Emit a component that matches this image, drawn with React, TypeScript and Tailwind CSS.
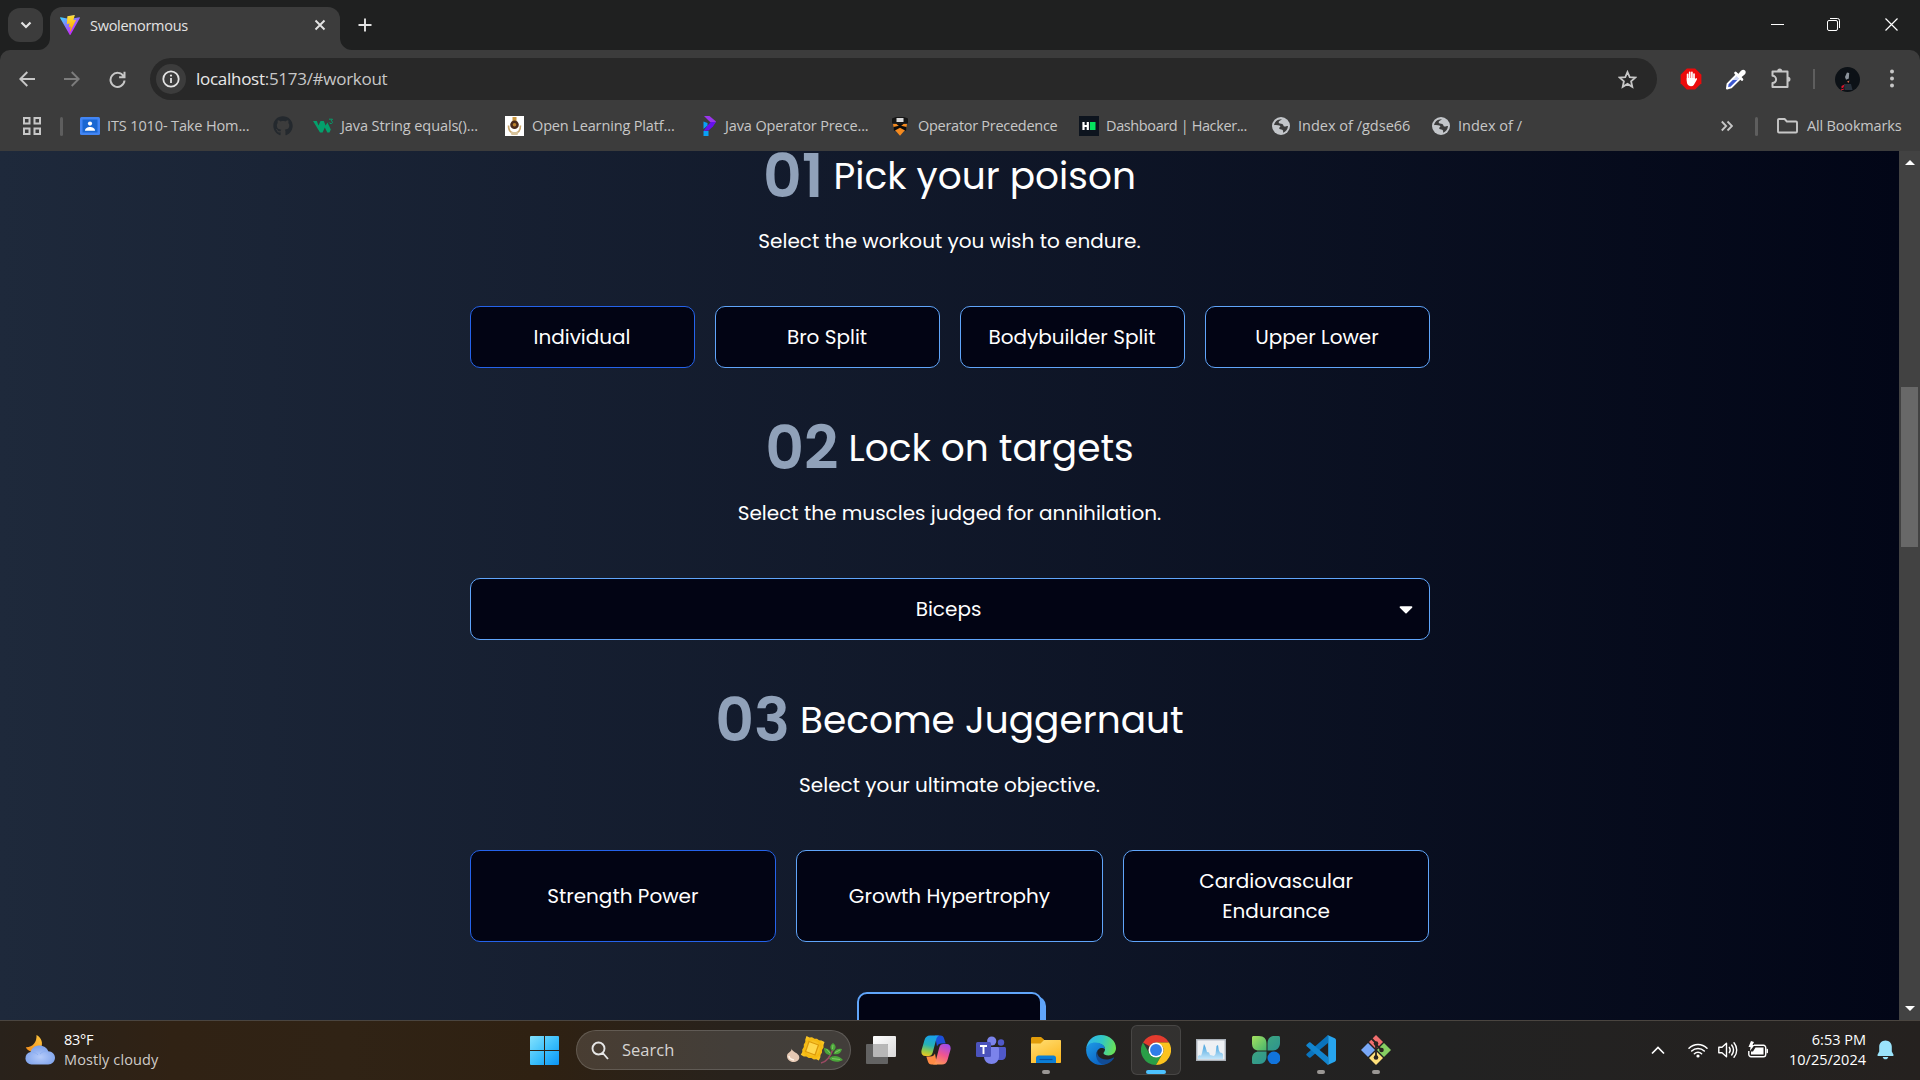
import React from "react";
import { FaCaretDown, FaGithub } from "react-icons/fa";

/* ---------- Tab strip and toolbar icons ---------- */

const ViteLogo = () => (
  <svg className="size-5 shrink-0" viewBox="0 0 256 257">
    <defs>
      <linearGradient id="va" x1="-.8%" x2="57.6%" y1="7.7%" y2="78.4%">
        <stop offset="0%" stopColor="#41D1FF" />
        <stop offset="100%" stopColor="#BD34FE" />
      </linearGradient>
      <linearGradient id="vb" x1="43.4%" x2="50.3%" y1="2.2%" y2="89%">
        <stop offset="0%" stopColor="#FFEA83" />
        <stop offset="8.3%" stopColor="#FFDD35" />
        <stop offset="100%" stopColor="#FFA800" />
      </linearGradient>
    </defs>
    <path fill="url(#va)" d="M255.153 37.938 134.897 252.976c-2.483 4.44-8.862 4.466-11.382.048L.875 37.958c-2.746-4.814 1.371-10.646 6.827-9.67l120.385 21.517a6.537 6.537 0 0 0 2.322-.004l117.867-21.483c5.438-.991 9.574 4.796 6.877 9.62Z" />
    <path fill="url(#vb)" d="M185.432.063 96.44 17.501a3.268 3.268 0 0 0-2.634 3.014l-5.474 92.456a3.268 3.268 0 0 0 3.997 3.378l24.777-5.718c2.318-.535 4.413 1.507 3.936 3.838l-7.361 36.047c-.495 2.426 1.782 4.5 4.151 3.78l15.304-4.649c2.372-.72 4.652 1.36 4.15 3.788l-11.698 56.621c-.732 3.542 3.979 5.473 5.943 2.437l1.313-2.028 72.516-144.72c1.215-2.423-.88-5.186-3.54-4.672l-25.505 4.922c-2.396.462-4.435-1.77-3.759-4.114l16.646-57.705c.677-2.35-1.37-4.583-3.769-4.113Z" />
  </svg>
);

const Glyph = ({
  d,
  box,
  className,
  w = 2,
}: {
  d: string;
  box: string;
  className: string;
  w?: number;
}) => (
  <svg className={className} viewBox={box} fill="none" stroke="currentColor" strokeWidth={w}>
    <path d={d} />
  </svg>
);

const InfoIcon = () => (
  <svg className="size-[18px]" viewBox="0 0 18 18" fill="none">
    <circle cx="9" cy="9" r="7.7" stroke="#e3e3e3" strokeWidth="1.8" />
    <path d="M9 8v5" stroke="#e3e3e3" strokeWidth="1.8" />
    <circle cx="9" cy="5.6" r="1.1" fill="#e3e3e3" />
  </svg>
);

const AdHand = () => (
  <svg className="size-[22px]" viewBox="0 0 22 22">
    <path d="M6.8.6h8.4l6.2 6.2v8.4l-6.2 6.2H6.8L.6 15.2V6.8z" fill="#ec0b0b" />
    <path d="M7.6 6.300v6M9.700 4.300v7M11.900 4.300v7M14 6v6" stroke="#fff" strokeWidth="1.700" strokeLinecap="round" />
    <path d="M6.800 10h8v3.500c0 3-1.300 4.700-3.900 4.700-2.800 0-4.100-2-4.100-4.700z" fill="#fff" />
    <path d="M14.200 14.500l2-3.500" stroke="#fff" strokeWidth="1.700" strokeLinecap="round" />
  </svg>
);

const Eyedropper = () => (
  <svg className="size-[22px]" viewBox="0 0 22 22">
    <path d="M2 20.500l.6-4.600L12 6.400l3.600 3.700-9.400 9.300-4.200 1.100z" fill="#3b57d0" stroke="#fff" strokeWidth="2" strokeLinejoin="round" />
    <path d="M6.500 12L12 6.500l3 3-2.500 2.500z" fill="#fff" opacity=".75" />
    <path d="M10.500 5l6.500 6.500" stroke="#fff" strokeWidth="2.600" strokeLinecap="round" />
    <path d="M12.800 6.500L16 2.800c1.300-1.300 3-1.300 4-.3s1 2.700-.3 4L16 9.600z" fill="#fff" />
  </svg>
);

const Puzzle = () => (
  <svg className="h-[22px] w-[22px]" viewBox="0 0 22 22" fill="none" stroke="#c7c7c7" strokeWidth="2" strokeLinejoin="round">
    <path d="M2.500 3.500H17.500V19H2.500V15a3.600 3.600 0 0 0 0-7.200z" />
    <path d="M7.200 3a2.500 2.500 0 0 1 5 0zM18 8.700a2.500 2.500 0 0 1 0 5z" fill="#c7c7c7" stroke="none" />
  </svg>
);

const Avatar = () => (
  <svg className="size-[25px]" viewBox="0 0 25 25">
    <circle cx="12.500" cy="12.500" r="12.500" fill="#0c1116" />
    <path d="M12 5.500l2.200.5-.4 5.500-2.800 1.200-1-2.800z" fill="#8c939b" />
    <path d="M12 14.500l2.500-1-1 2.500z" fill="#d0694a" />
    <path d="M9 17h7l1.500 6h-8z" fill="#28313b" />
    <path d="M6.500 19l3-1.500-1 3-2 1z" fill="#e0122b" />
    <path d="M6 23l3-1" stroke="#e0122b" />
  </svg>
);

const Folder = () => (
  <svg className="h-4 w-[21px]" viewBox="0 0 21 16" fill="none" stroke="#c7c7c7" strokeWidth="1.900" strokeLinejoin="round">
    <path d="M1 13.500V2a1 1 0 0 1 1-1h5.600l2.300 2.500H19a1 1 0 0 1 1 1v9a1 1 0 0 1-1 1H2a1 1 0 0 1-1-1z" />
  </svg>
);

/* ---------- Bookmark icons ---------- */

const Classroom = () => (
  <svg className="h-[18px] w-5" viewBox="0 0 20 18">
    <rect width="20" height="18" rx="1.500" fill="#4285f4" />
    <rect x="2.500" y="2.500" width="15" height="13" fill="#1967d2" />
    <circle cx="10" cy="6.600" r="2.100" fill="#fff" />
    <path d="M5 13.800c0-2.700 2.500-3.800 5-3.800s5 1.100 5 3.800z" fill="#fff" />
  </svg>
);
const W3 = () => (
  <svg className="h-4 w-[21px]" viewBox="0 0 21 16">
    <path d="M0 3h3.800l1.700 4.500L7.500 3h3.300l1.800 4.500L14.500 4.500l3.300 7-1.300 3h-2.200l-2.500-5-2.200 5H7z" fill="#04a06c" />
    <path d="M16 1.200h3.500l-1.500 1.700c2 .2 2 2.600 0 2.600-1 0-1.500-.4-1.700-.9" stroke="#04a06c" strokeWidth="1" fill="none" />
  </svg>
);
const Crest = () => (
  <svg className="h-5 w-[19px]" viewBox="0 0 19 20">
    <rect width="19" height="20" fill="#fff" />
    <rect x="7.500" y="1" width="4" height="5" fill="#c8953e" />
    <path d="M3.500 9.500c0 5 2.500 7.500 6 7.500s6-2.500 6-7.500" stroke="#c9a66b" strokeWidth="1.600" fill="none" />
    <circle cx="9.500" cy="8.800" r="4.300" fill="#4b2a1c" />
    <circle cx="9.500" cy="8.800" r="1.800" fill="#b9812c" />
    <path d="M5.500 16h8l-1 3h-6z" fill="#d8c39b" />
  </svg>
);
const Programiz = () => (
  <svg className="h-5 w-[14px]" viewBox="0 0 14 20">
    <path d="M2 0h5.500L14 5.500 11.500 9 6 4z" fill="#9a35ec" />
    <path d="M13.800 6L11 10.500 6.500 14.500 1.500 15l4-5.500L9 6z" fill="#6510ee" />
    <path d="M1.500 5.500L5.500 7v2.500L1.500 13z" fill="#0aa1f5" />
    <path d="M1.500 15h5v5h-5z" fill="#0aa1f5" />
  </svg>
);
const Princeton = () => (
  <svg className="h-5 w-[18px]" viewBox="0 0 18 20">
    <path d="M1 2.500l4-1.500h8l4 1.500v5H1z" fill="#161616" />
    <path d="M5.500 2h7v4h-7z" fill="#dadada" />
    <path d="M2 8h14l-1 5-6 6.800L3 13z" fill="#f58a1f" />
    <path d="M5 7.500h8L9 11zM2.500 11L9 9.500l6.500 1.500-.5 4L9 11.800 3 15z" fill="#0c0c0c" />
  </svg>
);
const HackerRank = () => (
  <svg className="size-5" viewBox="0 0 20 20">
    <rect width="20" height="20" fill="#0d141e" />
    <path d="M4.500 6v8M8.800 6v8M4 10h5" stroke="#fff" strokeWidth="2.200" />
    <rect x="11" y="6" width="5.500" height="8" fill="#05e35e" />
  </svg>
);
const Globe = () => (
  <svg className="size-[18px]" viewBox="0 0 18 18">
    <circle cx="9" cy="9" r="9" fill="#c3c6ca" />
    <path d="M10.200 2.200c-1.200 1.700-3.600 1.400-3.500 3.200.1 1.500 2.300.9 3.600 1.500 1.600.8.700 2.200 2.200 2.600 1.500.3 2-.8 3.500-.6-.1 3.200-2.200 5.900-5 6.800.3-1.500.2-2.400-.8-2.900-1.200-.6-2.500 0-3-1.200-.5-1.400 1.700-1.500 1-2.600C7.500 8 4.800 8.600 2.100 8c.4-3.300 3.700-6.300 8.100-5.800z" fill="#3c3c3c" />
    <path d="M7 5.500c1.600-.7 2.800.5 4.500-.6l2.700-1.600-2.600-1.400-2.200.6z" fill="#c3c6ca" />
  </svg>
);

/* ---------- Taskbar icons ---------- */

const Weather = () => (
  <svg className="h-[30px] w-[30px]" viewBox="0 0 30 30">
    <defs>
      <linearGradient id="moon" x1="1" x2="0" y1="0" y2="1">
        <stop stopColor="#ffc83d" />
        <stop offset="1" stopColor="#f08a1c" />
      </linearGradient>
      <radialGradient id="cloud" cx=".5" cy=".6" r=".6">
        <stop stopColor="#b5cbfa" />
        <stop offset="1" stopColor="#7ba0ea" />
      </radialGradient>
    </defs>
    <path d="M11.500 0c5 2.500 7 8.500 4.300 13L10 17C5.500 17 2 15 .8 12.200 7.500 12.500 12 7.500 11.500 0z" fill="url(#moon)" />
    <path d="M6.500 29.500a6.300 6.300 0 0 1-.9-12.500C7 12.500 10.500 10.500 14.500 10.500s7.500 2.300 8.700 5.700c4 0 6.800 3 6.800 6.600s-3 6.700-6.800 6.700z" fill="url(#cloud)" />
    <path d="M6 17.500c3-.5 5.500.5 7 2.500M15 19c2-2.300 5-3.200 8-2.700" stroke="#8fb0f2" strokeWidth="1" fill="none" />
  </svg>
);
const WindowsLogo = () => (
  <svg className="size-[29px]" viewBox="0 0 29 29">
    <defs>
      <linearGradient id="win" x1="0" x2="1" y1="0" y2="1">
        <stop stopColor="#84e2fd" />
        <stop offset=".55" stopColor="#38bdfb" />
        <stop offset="1" stopColor="#0b94f4" />
      </linearGradient>
    </defs>
    <path d="M1 0h13v14H0V1a1 1 0 0 1 1-1zM15 0h13a1 1 0 0 1 1 1v13H15zM0 15h14v14H1a1 1 0 0 1-1-1zM15 15h14v13a1 1 0 0 1-1 1H15z" fill="url(#win)" />
  </svg>
);
const PastaArt = () => (
  <svg className="h-[30px] w-[56px]" viewBox="0 0 56 30">
    <defs>
      <radialGradient id="pasta" cx=".5" cy=".5" r=".6">
        <stop stopColor="#ffe066" />
        <stop offset=".6" stopColor="#f5b80f" />
        <stop offset="1" stopColor="#ffcf33" />
      </radialGradient>
    </defs>
    <path d="M4.500 13.500c0 3 7.500 4.500 7.800 8.500.2 3.500-2.800 5-6 5S0 24.500 0 21s5-4 4.500-7.500z" fill="#e6c9b4" />
    <path d="M2 21c0 2 2 3.500 5 4" stroke="#fff3e8" strokeWidth="1.500" fill="none" />
    <path d="M19.500 1l3 1.500 2.500-.2 2.500 1.500 2.500 0 2 1.500 2.500.2 3 1.500-1 3 0 2.500-1.500 2.500 0 2.500-1.500 2.500-.2 2.500-1.500 3-2.500-1.200-2.500.2-2.500-1.500-2.500 0-2.500-1.500-2.500 0-3-1.700 1.500-2.800 0-2.500 1.500-2.500 0-2.500 1.500-2.500 0-2.500z" fill="url(#pasta)" />
    <path d="M22 6.500l9.500 3.500-3.500 10-9.500-3.500z" fill="#ffd84d" stroke="#dd9a0a" strokeWidth="1.300" strokeLinejoin="round" />
    <path d="M34 28c5-1 9-5 12-14" stroke="#9b4a63" strokeWidth="1.600" fill="none" />
    <path d="M46 16c-3.500-2-3.500-5.500 0-8 3.500 2.500 3.500 6 0 8zM44 20c-4.500 0-7-2.500-7-7 4.500.5 7.500 3 7 7zM46.500 19c1-4.500 4.500-6 8.500-5-1 4.500-4 6-8.500 5zM42 23.500c4-4 10-3 14 1.500-5 3-10.500 2-14-1.500z" fill="#4ba53a" />
    <path d="M45.500 14l.5-4M43 18l-3.500-4M48 17.500l5-2.500M45 23.500l8 1" stroke="#8ed36e" strokeWidth=".8" />
  </svg>
);
const TaskView = () => (
  <svg className="size-[30px]" viewBox="0 0 30 30">
    <defs>
      <linearGradient id="tv" x1="0" x2="1" y1="0" y2="1">
        <stop stopColor="#fff" />
        <stop offset="1" stopColor="#d9d9d9" />
      </linearGradient>
    </defs>
    <rect x="7" y="1" width="23" height="21" rx="1" fill="url(#tv)" />
    <rect y="9" width="22" height="20" rx="1" fill="#6a6a6a" opacity=".9" />
    <path d="M7 9h14a1 1 0 0 1 1 1v12H8a1 1 0 0 1-1-1z" fill="#b7b7b7" />
  </svg>
);
const Copilot = () => (
  <svg className="size-[30px]" viewBox="0 0 30 30">
    <defs>
      <linearGradient id="c1" x1=".4" x2=".2" y1="0" y2="1">
        <stop stopColor="#18a0ea" />
        <stop offset=".45" stopColor="#27b3b4" />
        <stop offset=".75" stopColor="#93c94a" />
        <stop offset="1" stopColor="#f3c71e" />
      </linearGradient>
      <linearGradient id="c2" x1=".7" x2=".3" y1="0" y2="1">
        <stop stopColor="#a24bea" />
        <stop offset=".5" stopColor="#f0558f" />
        <stop offset="1" stopColor="#ff9a55" />
      </linearGradient>
    </defs>
    <path d="M14 .5h5.500c2 0 3 1.200 3.600 3l1.600 5h-4.200c-2.500 0-3.500 1-4.500 3z" fill="#1c4fd8" />
    <path d="M16 29.500h-5.500c-2 0-3-1.200-3.600-3l-1.600-5h4.200c2.500 0 3.500-1 4.500-3z" fill="#ff8b45" />
    <path d="M9 .5h9.500c-2 .5-2.800 2-3.300 4l-3.500 13c-.6 2.500-2 3.500-4 3.500H4.500C1 21-.2 18 .6 15L3.500 5C4.400 2 6.200.5 9 .5z" fill="url(#c1)" />
    <path d="M21 29.500h-9.500c2-.5 2.800-2 3.300-4l3.500-13c.6-2.500 2-3.500 4-3.500h3.200c3.500 0 4.700 3 3.900 6L26.500 25c-.9 3-2.700 4.500-5.500 4.500z" fill="url(#c2)" />
  </svg>
);
const Teams = () => (
  <svg className="size-[30px]" viewBox="0 0 30 30">
    <circle cx="25" cy="7.500" r="3.200" fill="#5059c9" />
    <path d="M21 12h7.500c.8 0 1.500.7 1.500 1.500V20c0 3-2 5-4.500 5H21z" fill="#5059c9" />
    <circle cx="15.700" cy="6" r="4.600" fill="#7b83eb" />
    <path d="M9 12h12.500c.8 0 1.500.7 1.500 1.500v8c0 4.500-3.200 7.500-7.500 7.500S8 26 8 21.500z" fill="#7b83eb" />
    <rect y="7" width="15" height="15" rx="1.500" fill="#4b53bc" />
    <path d="M4 11h7M7.500 11v8" stroke="#fff" strokeWidth="1.900" />
  </svg>
);
const Explorer = () => (
  <svg className="size-[30px]" viewBox="0 0 30 30">
    <defs>
      <linearGradient id="ex" x1="0" x2=".6" y1="0" y2="1">
        <stop stopColor="#ffdf76" />
        <stop offset="1" stopColor="#fdb924" />
      </linearGradient>
    </defs>
    <path d="M0 3.500C0 2.700.6 2 1.500 2H10l3 2.500V9H0z" fill="#e09c0a" />
    <path d="M0 8.500h9.500L13 5h16c.6 0 1 .4 1 1v21c0 .6-.4 1-1 1H0z" fill="url(#ex)" />
    <path d="M5 28v-5c0-1.500 1-2.500 2.500-2.500h15c1.500 0 2.500 1 2.500 2.500v5z" fill="#0b7ed6" />
    <path d="M8.500 24.500h13" stroke="#0a4f9e" strokeWidth="1.200" />
  </svg>
);
const Edge = () => (
  <svg className="size-[30px]" viewBox="0 0 30 30">
    <defs>
      <linearGradient id="e1" x1="0" x2="1" y1=".3" y2=".5">
        <stop stopColor="#2fb4ee" />
        <stop offset=".5" stopColor="#31c7c5" />
        <stop offset="1" stopColor="#6ae256" />
      </linearGradient>
      <linearGradient id="e2" x1="0" x2=".7" y1="0" y2="1">
        <stop stopColor="#1e9be6" />
        <stop offset="1" stopColor="#0b63c4" />
      </linearGradient>
    </defs>
    <path d="M.2 14C.8 6 7 0 15 0c8.500 0 15 6 15 13 0 4.600-3.500 7.500-7.500 7.500-3 0-5-1-5-2.200 0-1 1.500-1.500 1.500-4C19 11 16 8.500 11 8.500 6 8.500 1.500 10.500.2 14z" fill="url(#e1)" />
    <path d="M.2 14c1-4.500 4.800-6.500 9-6.500 6 0 10 3.200 9.800 6.800-2.500-2.800-8-1.300-8.500 4.200-.4 5 3.500 10.500 9 10.700-1.500.6-3 .8-4.500.8C6.500 30-.5 23 .2 14z" fill="url(#e2)" />
    <path d="M13 13c-3 3-2 8.500 2.500 10.500 3.700 1.700 8 1.200 11.500-.8.700-.4 1.200.3.8.9C25 27.500 21 30 17.500 29.500 12 28.500 9.500 23 10.500 18.500c.4-2.500 1-4 2.500-5.500z" fill="#114c96" />
  </svg>
);
const Chrome = () => (
  <svg className="size-[30px]" viewBox="0 0 48 48">
    <path d="M24 0a24 24 0 0 1 20.800 12H24a12 12 0 0 0-10.400 6L3.200 12A24 24 0 0 1 24 0z" fill="#e33b2e" />
    <path d="M3.200 12l10.400 18A12 12 0 0 0 24 36l10.400-6L24 48A24 24 0 0 1 3.200 12z" fill="#2a9e47" />
    <path d="M44.800 12A24 24 0 0 1 24 48l10.400-18A12 12 0 0 0 34.400 18L24 12z" fill="#fcc31e" />
    <circle cx="24" cy="24" r="12" fill="#fff" />
    <circle cx="24" cy="24" r="9.500" fill="#2f7de9" />
  </svg>
);
const PerfMonitor = () => (
  <svg className="h-[22px] w-[30px]" viewBox="0 0 30 22">
    <defs>
      <linearGradient id="pm" x1="0" x2="0" y1="0" y2="1">
        <stop stopColor="#3f9fdc" />
        <stop offset="1" stopColor="#c4e6fa" />
      </linearGradient>
    </defs>
    <rect x=".7" y=".7" width="28.600" height="20.600" fill="#eef1f4" stroke="#a9b0b8" strokeWidth="1.400" />
    <path d="M2 17l2-1 1 1 1-3 2-9 1.500 3 1.500 5 2 .5 1 2.500 4 1 1.500-2 1-8 1.500-1 .8 5 1.200 2.500 2 .5 1 1.500V20H2z" fill="url(#pm)" />
  </svg>
);
const Clover = () => (
  <svg className="size-[28px]" viewBox="0 0 28 28">
    <defs>
      <linearGradient id="k1" x1="0" x2="1" y1="0" y2="1">
        <stop stopColor="#a5e05f" />
        <stop offset="1" stopColor="#46b56d" />
      </linearGradient>
      <linearGradient id="k2" x1="0" x2="1" y1="0" y2="1">
        <stop stopColor="#46b077" />
        <stop offset="1" stopColor="#258a97" />
      </linearGradient>
    </defs>
    <path d="M0 1.500C0 .6.6 0 1.500 0H7c5 0 7.500 3 7.500 7.500v7H7c-4.500 0-7-2.500-7-7z" fill="url(#k1)" />
    <path d="M15.500 14.500v-7C15.500 3 18 0 22.500 0h4c.9 0 1.500.6 1.500 1.500V7c0 4.500-3 7.500-7 7.500zM14.500 15.500v5c0 4.500-3 7.500-7 7.500h-6C.6 28 0 27.400 0 26.500v-4c0-4.500 3-7 7-7z" fill="url(#k2)" />
    <circle cx="22" cy="22" r="6.500" fill="#1174dc" />
  </svg>
);
const VSCode = () => (
  <svg className="size-[30px]" viewBox="0 0 30 30">
    <path d="M22 0v8L4.500 22.500c-.5.4-1 .4-1.500 0L.7 20.400c-.6-.5-.6-1.200 0-1.700z" fill="#0a74bd" />
    <path d="M22 30v-8L4.500 7.500c-.5-.4-1-.4-1.500 0L.7 9.600c-.6.5-.6 1.200 0 1.700z" fill="#1285cf" />
    <path d="M21.500 0l7.300 3.300c.8.4 1.200 1 1.200 1.900v19.600c0 .9-.4 1.500-1.200 1.900L21.500 30c.4-.3.7-.9.7-1.500v-27c0-.6-.3-1.200-.7-1.500z" fill="#27a5ef" />
  </svg>
);
const GitBash = () => (
  <svg className="size-[30px]" viewBox="0 0 30 30">
    <path d="M15 0l7 7-7 7-7-7z" fill="#f26f6f" />
    <path d="M23 8l7 7-7 7-7-7z" fill="#86cf62" />
    <path d="M7 8l7 7-7 7-7-7z" fill="#79a8f7" />
    <path d="M15 16l7 7-7 7-7-7z" fill="#ffe07a" />
    <path d="M10.500 3.500l4.500 4.500v14M15 9.500l5.500 5.500" stroke="#2a2320" strokeWidth="1.800" fill="none" />
    <circle cx="15" cy="8.500" r="2.300" fill="#2a2320" />
    <circle cx="15" cy="22.500" r="2.300" fill="#2a2320" />
    <circle cx="20.500" cy="15" r="2.300" fill="#2a2320" />
  </svg>
);

const Wifi = () => (
  <svg className="h-4 w-5" viewBox="0 0 20 16" fill="none" stroke="#fff" strokeWidth="1.500" strokeLinecap="round">
    <path d="M1 6.200a12.700 12.700 0 0 1 18 0M3.700 9a8.900 8.900 0 0 1 12.600 0M6.400 11.700a5.100 5.100 0 0 1 7.200 0" />
    <circle cx="10" cy="14" r="1.600" fill="#fff" stroke="none" />
  </svg>
);
const Speaker = () => (
  <svg className="h-[18px] w-5" viewBox="0 0 20 18" fill="none" stroke="#fff" strokeWidth="1.400" strokeLinecap="round" strokeLinejoin="round">
    <path d="M.8 6.300v5.400H4l4.500 4V2.300L4 6.300z" />
    <path d="M11.300 6.300c1 1.500 1 4 0 5.400M13.700 4c2.200 3 2.200 7 0 10M16 1.700c3.600 4.300 3.600 10.300 0 14.600" />
  </svg>
);
const Battery = () => (
  <svg className="h-[18px] w-5" viewBox="0 0 20 18">
    <path d="M6 4.300h9.500a2.200 2.200 0 0 1 2.200 2.200v7a2.200 2.200 0 0 1-2.200 2.200H3a2.200 2.200 0 0 1-2.200-2.200V10" fill="none" stroke="#fff" strokeWidth="1.400" />
    <path d="M7.500 6.500h8v7H3v-3h2zM18.500 7.800h.7c.5 0 .8.300.8.800v2.800c0 .5-.3.800-.8.800h-.7zM3 0L.5 6h2L2 10l4.500-6h-2L6 1z" fill="#fff" />
  </svg>
);
const Bell = () => (
  <svg className="h-5 w-[17px]" viewBox="0 0 17 20">
    <path d="M8.500.5c3.700 0 6.300 2.800 6.300 6.300v4.700l1.700 3.300c.3.700 0 1.200-.7 1.200H1.200c-.7 0-1-.5-.7-1.200l1.700-3.300V6.800C2.200 3.300 4.800.5 8.500.5zM5.700 17h5.600c-.4 1.500-1.400 2.300-2.800 2.300S6.100 18.500 5.700 17z" fill="#9ae3fb" />
  </svg>
);

/* ---------- Browser chrome ---------- */

function TabStrip() {
  return (
    <div className="flex h-[50px] items-start text-[#e3e3e3]">
      <div className="mt-2 ml-2 flex h-[34px] w-[35px] items-center justify-center rounded-xl bg-[#3c3c3c]">
        <Glyph box="0 0 12 8" className="h-2 w-3" d="M1.500 1.500L6 6l4.500-4.500" w={2.2} />
      </div>
      <svg className="mt-[38px] ml-[-5px] size-3" viewBox="0 0 12 12">
        <path d="M12 0v12H0A12 12 0 0 0 12 0z" fill="#3c3c3c" />
      </svg>
      <div className="mt-[7px] flex h-[43px] w-[290px] items-center rounded-t-xl bg-[#3c3c3c] pr-3.5 pb-[7px] pl-2.5">
        <ViteLogo />
        <span className="ml-2.5 flex-1 pt-0.5 text-[14.5px] tracking-[-0.27px]">Swolenormous</span>
        <Glyph box="0 0 12 12" className="size-3" d="M1.500 1.500l9 9M10.500 1.500l-9 9" w={1.9} />
      </div>
      <svg className="mt-[38px] size-3" viewBox="0 0 12 12">
        <path d="M0 0v12h12A12 12 0 0 1 0 0z" fill="#3c3c3c" />
      </svg>
      <Glyph box="0 0 14 14" className="mt-[18px] ml-[6px] size-3.5" d="M7 .5v13M.5 7h13" w={1.9} />
      <div className="mt-[18px] ml-auto flex items-center gap-[43px] pr-[22px] text-white">
        <Glyph box="0 0 13 13" className="size-[13px]" d="M0 6.500h13" w={1} />
        <svg className="size-[13px]" viewBox="0 0 13 13" fill="none" stroke="#fff">
          <rect x=".5" y="2.500" width="10" height="10" rx="1.500" />
          <path d="M3 .5h7.500a2 2 0 0 1 2 2V10" />
        </svg>
        <Glyph box="0 0 13 13" className="ml-[2px] size-[13px]" d="M.5 .5l12 12M12.500 .5l-12 12" w={1.2} />
      </div>
    </div>
  );
}

function Toolbar() {
  return (
    <div className="flex h-[58px] items-center text-[#c7c7c7]">
      <Glyph box="0 0 16 16" className="ml-[19px] size-4" d="M16 8H1.500M8.300 1L1.300 8l7 7" w={1.9} />
      <Glyph box="0 0 16 16" className="ml-[29px] size-4 text-[#7c7c7c]" d="M0 8h14.500M7.700 1l7 7-7 7" w={1.9} />
      <svg className="ml-[29px] size-[17px]" viewBox="0 0 17 17" fill="none" stroke="#c7c7c7" strokeWidth="2">
        <path d="M14.500 5.200A7 7 0 1 0 15.500 9.500M15.500 .8v5.400h-5.400" />
      </svg>
      <div className="ml-6 flex h-[42px] w-[1507px] items-center rounded-full bg-[#282828] pr-5">
        <span className="ml-1.5 flex size-[30px] items-center justify-center rounded-full bg-[#3c3c3c]">
          <InfoIcon />
        </span>
        <span className="ml-2.5 flex-1 text-[17px] tracking-[-0.28px] text-[#c7c7c7]">
          <span className="text-[#e8e8e8]">localhost</span>:5173/#workout
        </span>
        <svg className="size-[19px]" viewBox="0 0 19 19" fill="none" stroke="#c7c7c7" strokeWidth="1.800" strokeLinejoin="miter">
          <path d="M9.500 2l2.200 5.100 5.600.5-4.200 3.700 1.200 5.500-4.800-2.900-4.800 2.900 1.200-5.500L1.700 7.600l5.600-.5z" />
        </svg>
      </div>
      <div className="ml-[23px] flex items-center">
        <AdHand />
        <span className="ml-[23px]"><Eyedropper /></span>
        <span className="ml-[23px]"><Puzzle /></span>
        <span className="ml-[21px] h-5 w-0.5 bg-[#5e5e5e]" />
        <span className="ml-5"><Avatar /></span>
        <svg className="ml-[30px] h-5 w-1" viewBox="0 0 4 20" fill="#c7c7c7">
          <circle cx="2" cy="2.500" r="2" />
          <circle cx="2" cy="9.500" r="2" />
          <circle cx="2" cy="16.500" r="2" />
        </svg>
      </div>
    </div>
  );
}

function Bookmark({ icon, label, className }: { icon: React.ReactNode; label: string; className: string }) {
  return (
    <div className={"flex shrink-0 items-center whitespace-nowrap " + className}>
      {icon}
      <span>{label}</span>
    </div>
  );
}

function BookmarksBar() {
  return (
    <div className="flex h-[43px] items-center pb-[7px] text-[14.5px] text-[#c7c7c7]">
      <svg className="ml-[23px] size-[18px]" viewBox="0 0 18 18" fill="none" stroke="#c7c7c7" strokeWidth="2">
        <path d="M1 1h5.500v5.500H1zM11.500 1H17v5.500h-5.500zM1 11.500h5.500V17H1zM11.500 11.500H17V17h-5.500z" />
      </svg>
      <span className="ml-[19px] h-[19px] w-[3px] rounded bg-[#5e5e5e]" />
      <Bookmark className="ml-[17px] w-[193px] gap-[7px] tracking-[-0.13px]" icon={<Classroom />} label="ITS 1010- Take Hom..." />
      <FaGithub className="mr-5 size-5 shrink-0 text-[#24292e]" />
      <Bookmark className="w-[192px] gap-[7px] tracking-[-0.08px]" icon={<W3 />} label="Java String equals()..." />
      <Bookmark className="w-[197px] gap-2 tracking-[-0.14px]" icon={<Crest />} label="Open Learning Platf..." />
      <Bookmark className="w-[189px] gap-[9px] tracking-[-0.12px]" icon={<Programiz />} label="Java Operator Prece..." />
      <Bookmark className="w-[188px] gap-[9px] tracking-[-0.28px]" icon={<Princeton />} label="Operator Precedence" />
      <Bookmark className="w-[193px] gap-[7px] tracking-[-0.39px]" icon={<HackerRank />} label="Dashboard | Hacker..." />
      <Bookmark className="w-[160px] gap-[8px]" icon={<Globe />} label="Index of /gdse66" />
      <Bookmark className="w-[160px] gap-[8px]" icon={<Globe />} label="Index of /" />
      <Glyph box="0 0 12 12" className="ml-[129px] size-3" d="M.8 1.500L5.200 6 .8 10.500M6.500 1.500L11 6l-4.500 4.500" w={1.8} />
      <span className="ml-[22px] h-[19px] w-[3px] rounded bg-[#5e5e5e]" />
      <Bookmark className="ml-[19px] gap-[9px] tracking-[-0.17px]" icon={<Folder />} label="All Bookmarks" />
    </div>
  );
}

/* ---------- Page ---------- */

function Heading({ num, title, desc }: { num: string; title: string; desc: string }) {
  return (
    <div className="flex h-[164px] flex-col items-center pt-1">
      <div className="flex h-[60px] items-center gap-2.5 whitespace-nowrap">
        <span className="text-[60px] leading-[60px] font-semibold text-slate-400">{num}</span>
        <span className="text-[37.5px] leading-[60px]">{title}</span>
      </div>
      <p className="mt-5 text-xl leading-[30px]">{desc}</p>
    </div>
  );
}

const cardBase = "flex items-center justify-center rounded-[10px] border bg-[#020414] px-5 text-center text-xl leading-[30px] ";

function Card({ label, active, className }: { label: React.ReactNode; active?: boolean; className: string }) {
  return (
    <button className={cardBase + (active ? "border-[#2563eb] " : "border-[#60a5fa] ") + className}>
      {label}
    </button>
  );
}

function Page() {
  return (
    <main className="h-[869px] flex-1 overflow-hidden bg-[linear-gradient(to_right,#1e293b,#020617)] font-['Poppins',sans-serif] text-white">
      <div className="ml-[469.5px] flex w-[960px] flex-col">
        <section className="-mt-[9px] h-[272px]">
          <Heading num="01" title="Pick your poison" desc="Select the workout you wish to endure." />
          <div className="grid grid-cols-4 gap-5">
            <Card active label="Individual" className="h-[62px]" />
            <Card label="Bro Split" className="h-[62px]" />
            <Card label="Bodybuilder Split" className="h-[62px] whitespace-nowrap" />
            <Card label="Upper Lower" className="h-[62px]" />
          </div>
        </section>
        <section className="h-[272px]">
          <Heading num="02" title="Lock on targets" desc="Select the muscles judged for annihilation." />
          <button className="flex h-[62px] w-full items-center rounded-[10px] border border-[#60a5fa] bg-[#020414] pr-3 text-xl">
            <span className="flex-1 pl-8 text-center">Biceps</span>
            <FaCaretDown className="size-[22px]" />
          </button>
        </section>
        <section className="h-[306px]">
          <Heading num="03" title="Become Juggernaut" desc="Select your ultimate objective." />
          <div className="grid grid-cols-3 gap-5">
            <Card active label="Strength Power" className="h-[92px]" />
            <Card label="Growth Hypertrophy" className="h-[92px]" />
            <Card label={<>Cardiovascular<br />Endurance</>} className="h-[92px]" />
          </div>
        </section>
        <div className="ml-[387px] h-[70px] w-[185px] rounded-[10px] border-2 border-[#60a5fa] bg-[#020414] shadow-[4px_4px_0_#60a5fa]" />
      </div>
    </main>
  );
}

function Scrollbar() {
  return (
    <div className="flex w-[21px] flex-col items-center bg-[#424242]">
      <div className="flex h-[22px] items-center justify-center">
        <span className="h-0 w-0 border-x-[5px] border-b-[5px] border-x-transparent border-b-white" />
      </div>
      <div className="mt-[214px] h-[160px] w-[17px] bg-[#686868]" />
      <div className="mt-auto flex h-[24px] items-center justify-center">
        <span className="h-0 w-0 border-x-[5px] border-t-[5px] border-x-transparent border-t-white" />
      </div>
    </div>
  );
}

/* ---------- Taskbar ---------- */

function AppIcon({ icon, state }: { icon: React.ReactNode; state?: "open" | "active" }) {
  return (
    <div className={"relative mr-[5px] flex size-[50px] shrink-0 items-center justify-center rounded-md " + (state === "active" ? "border border-white/10 bg-white/7" : "")}>
      {icon}
      {state === "open" && <span className="absolute bottom-px left-[21px] h-1 w-2 rounded-full bg-[#9a9794]" />}
      {state === "active" && <span className="absolute bottom-0 left-3.5 h-1 w-5 rounded-full bg-[#4cc2ff]" />}
    </div>
  );
}

function Taskbar() {
  return (
    <footer className="flex h-[60px] items-center border-t border-[#4a4540] bg-[linear-gradient(to_right,#29221b_0%,#302214_9%,#302315_18%,#2f2112_28%,#28221c_38%,#242220_55%,#222222_75%,#25211f_100%)] pb-px text-[14.5px] text-white">
      <div className="ml-[25px] flex w-[505px] items-center">
        <Weather />
        <div className="ml-[9px] pb-px leading-5">
          <div className="tracking-[-0.3px]">83°F</div>
          <div className="tracking-[0.12px] text-[#cfccc9]">Mostly cloudy</div>
        </div>
      </div>
      <WindowsLogo />
      <div className="ml-[17px] flex h-10 w-[275px] items-center rounded-full border border-white/15 bg-white/13 pr-[7px] pl-[14px]">
        <Glyph box="0 0 18 19" className="h-[19px] w-[18px] text-[#e6e6e6]" d="M13.500 7.500a6 6 0 1 1-12 0 6 6 0 0 1 12 0zM11.800 12l5.200 6" w={1.9} />
        <span className="ml-[13px] flex-1 text-[16.5px] text-[#d6d4d2]">Search</span>
        <PastaArt />
      </div>
      <div className="ml-[5px] flex items-center">
        <AppIcon icon={<TaskView />} />
        <AppIcon icon={<Copilot />} />
        <AppIcon icon={<Teams />} />
        <AppIcon icon={<Explorer />} state="open" />
        <AppIcon icon={<Edge />} />
        <AppIcon icon={<Chrome />} state="active" />
        <AppIcon icon={<PerfMonitor />} />
        <AppIcon icon={<Clover />} />
        <AppIcon icon={<VSCode />} state="open" />
        <AppIcon icon={<GitBash />} state="open" />
      </div>
      <div className="ml-auto flex items-center">
        <Glyph box="0 0 14 9" className="mr-[23px] h-[9px] w-3.5" d="M1 7.500L7 1.500l6 6" w={1.7} />
        <Wifi />
        <span className="ml-2.5"><Speaker /></span>
        <span className="ml-2.5"><Battery /></span>
        <div className="ml-5 w-[78px] pb-px text-right leading-5">
          <div>6:53 PM</div>
          <div>10/25/2024</div>
        </div>
        <span className="mr-[26px] ml-[11px]"><Bell /></span>
      </div>
    </footer>
  );
}

export default function App() {
  return (
    <div className="flex h-[1080px] w-[1920px] flex-col overflow-hidden bg-[#1f2020] font-['Segoe_UI','Open_Sans',sans-serif]">
      <TabStrip />
      <div className="h-[101px] rounded-t-[10px] bg-[#3c3c3c]">
        <Toolbar />
        <BookmarksBar />
      </div>
      <div className="flex h-[869px]">
        <Page />
        <Scrollbar />
      </div>
      <Taskbar />
    </div>
  );
}
